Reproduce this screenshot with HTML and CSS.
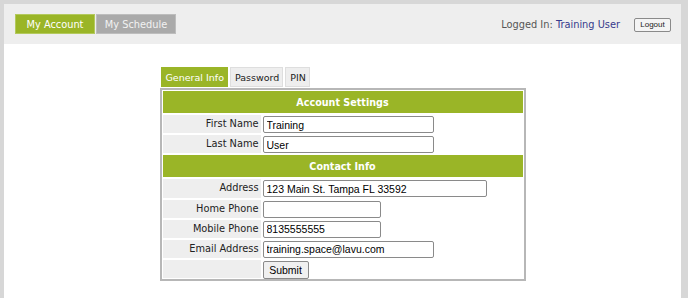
FILE: index.html
```html
<!DOCTYPE html>
<html>
<head>
<meta charset="utf-8">
<link rel="stylesheet" href="styles.css">
</head>
<body>
<div class="frame">
  <div class="topbar">
    <div class="navtabs">
      <div class="navtab active">My Account</div>
      <div class="navtab">My Schedule</div>
    </div>
    <div class="user">
      <span class="logged">Logged In: <span class="uname">Training User</span></span>
      <button class="logout">Logout</button>
    </div>
  </div>
  <div class="content">
    <div class="panel">
      <div class="ftabs">
        <div class="ftab active">General Info</div>
        <div class="ftab">Password</div>
        <div class="ftab">PIN</div>
      </div>
      <div class="box">
        <div class="sect">Account Settings</div>
        <div class="lbl">First Name</div><div class="val"><input class="inp w170" value="Training"></div>
        <div class="lbl">Last Name</div><div class="val"><input class="inp w170" value="User"></div>
        <div class="sect">Contact Info</div>
        <div class="lbl">Address</div><div class="val"><input class="inp w224" value="123 Main St. Tampa FL 33592"></div>
        <div class="lbl">Home Phone</div><div class="val"><input class="inp w118" value=""></div>
        <div class="lbl">Mobile Phone</div><div class="val"><input class="inp w118" value="8135555555"></div>
        <div class="lbl">Email Address</div><div class="val"><input class="inp w170" value="training.space@lavu.com"></div>
        <div class="lbl"></div><div class="val"><button class="submit">Submit</button></div>
      </div>
    </div>
  </div>
</div>
</body>
</html>
```

FILE: styles.css
```css
html, body {
  margin: 0;
  padding: 0;
}
body {
  background: #d7d7d7;
  padding: 4px 7px 0 4px;
  font-family: "DejaVu Sans", Verdana, sans-serif;
  font-size: 9.6px;
}
.frame {
  background: #ffffff;
  height: 294px;
  overflow: hidden;
}
.topbar {
  background: #eeeeee;
  height: 40px;
  display: flex;
  align-items: center;
  justify-content: space-between;
  padding: 0 10px 0 11px;
}
.navtabs {
  display: flex;
  gap: 1px;
}
.navtab {
  width: 80px;
  height: 20px;
  box-sizing: border-box;
  display: flex;
  align-items: center;
  justify-content: center;
  background: #aaaaaa;
  border: 1px solid #bdbdbd;
  color: #f2f2f2;
  font-size: 9.8px;
}
.navtab.active {
  background: #9ab527;
  border-color: #b3c95c;
  color: #ffffff;
}
.user {
  display: flex;
  align-items: center;
}
.logged {
  color: #555555;
  font-size: 9.8px;
}
.uname {
  color: #363a8c;
}
.logout {
  margin-left: 14px;
  margin-top: 1px;
  width: 37px;
  height: 14px;
  box-sizing: border-box;
  padding: 0;
  font-family: "Liberation Sans", Arial, sans-serif;
  font-size: 8px;
  color: #222;
  background: #f4f4f4;
  border: 1px solid #8a8a8a;
  border-radius: 2px;
}
.content {
  display: flex;
  justify-content: center;
  padding-top: 23px;
}
.panel {
  width: 366px;
}
.ftabs {
  display: flex;
  gap: 2px;
  margin-left: 1px;
  margin-bottom: 1px;
}
.ftab {
  height: 20px;
  box-sizing: border-box;
  display: flex;
  align-items: center;
  padding: 0 3px 0 4px;
  background: #eeeeee;
  border: 1px solid #dedede;
  color: #222222;
  font-size: 9.5px;
}
.ftab.active {
  background: #9ab527;
  border-color: #9ab527;
  color: #ffffff;
}
.box {
  border: 2px solid #b7b7b7;
  padding: 1px;
  display: grid;
  grid-template-columns: 98px 1fr;
  column-gap: 2px;
  row-gap: 2px;
}
.sect {
  grid-column: 1 / 3;
  height: 22px;
  background: #9ab527;
  color: #ffffff;
  font-weight: bold;
  font-size: 9.6px;
  display: flex;
  align-items: center;
  justify-content: center;
}
.lbl {
  height: 18.2px;
  background: #eeeeee;
  color: #222222;
  text-align: right;
  padding: 3px 2px 0 0;
  box-sizing: border-box;
  font-size: 9.8px;
}
.val {
  height: 18.2px;
  background: #ffffff;
  padding: 1px 0 0 0;
  box-sizing: border-box;
}
.inp {
  height: 17px;
  box-sizing: border-box;
  border: 1px solid #8a8a8a;
  border-radius: 2px;
  padding: 0 3px;
  margin: 0;
  font-family: "Liberation Sans", Arial, sans-serif;
  font-size: 10.5px;
  color: #000;
  display: block;
}
.w170 { width: 171px; }
.w224 { width: 224px; }
.w118 { width: 118px; }
.submit {
  width: 46px;
  height: 18px;
  box-sizing: border-box;
  padding: 0;
  margin: 0;
  font-family: "Liberation Sans", Arial, sans-serif;
  font-size: 10.5px;
  color: #000;
  background: #f0f0f0;
  border: 1px solid #8a8a8a;
  border-radius: 2px;
  display: block;
}
```
